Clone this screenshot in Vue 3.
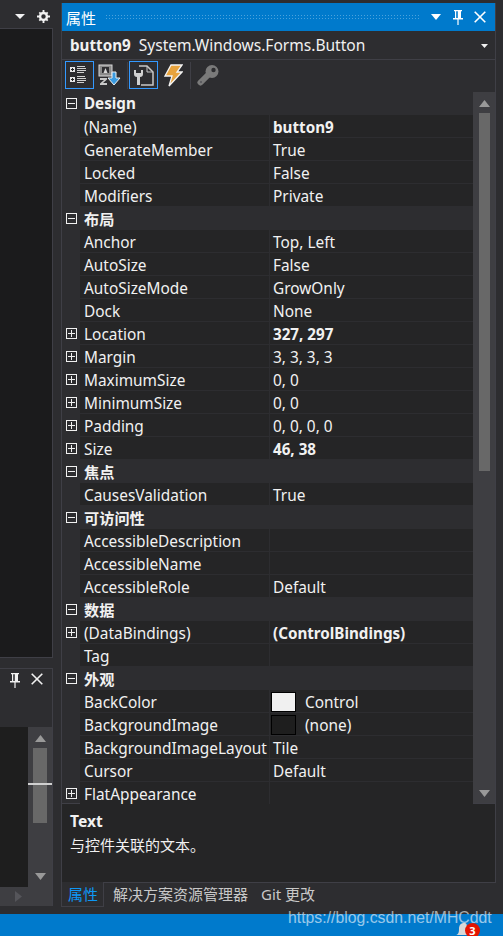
<script setup>
const rows = [
  { g: 'Design', open: true },
  { n: '(Name)', v: 'button9', b: true },
  { n: 'GenerateMember', v: 'True' },
  { n: 'Locked', v: 'False' },
  { n: 'Modifiers', v: 'Private' },
  { g: '布局', open: true },
  { n: 'Anchor', v: 'Top, Left' },
  { n: 'AutoSize', v: 'False' },
  { n: 'AutoSizeMode', v: 'GrowOnly' },
  { n: 'Dock', v: 'None' },
  { n: 'Location', v: '327, 297', b: true, plus: true },
  { n: 'Margin', v: '3, 3, 3, 3', plus: true },
  { n: 'MaximumSize', v: '0, 0', plus: true },
  { n: 'MinimumSize', v: '0, 0', plus: true },
  { n: 'Padding', v: '0, 0, 0, 0', plus: true },
  { n: 'Size', v: '46, 38', b: true, plus: true },
  { g: '焦点', open: true },
  { n: 'CausesValidation', v: 'True' },
  { g: '可访问性', open: true },
  { n: 'AccessibleDescription', v: '' },
  { n: 'AccessibleName', v: '' },
  { n: 'AccessibleRole', v: 'Default' },
  { g: '数据', open: true },
  { n: '(DataBindings)', v: '(ControlBindings)', b: true, plus: true },
  { n: 'Tag', v: '' },
  { g: '外观', open: true },
  { n: 'BackColor', v: 'Control', swatch: 'light' },
  { n: 'BackgroundImage', v: '(none)', swatch: 'dark' },
  { n: 'BackgroundImageLayout', v: 'Tile' },
  { n: 'Cursor', v: 'Default' },
  { n: 'FlatAppearance', v: '', plus: true }
]
</script>

<template>
  <div class="page">
    <div class="main">
      <div class="left">
        <div class="left-head">
          <svg width="10" height="5" viewBox="0 0 10 5"><path d="M0 0h10L5 5z" fill="#f1f1f1"/></svg>
          <svg width="13" height="13" viewBox="0 0 14 14"><circle cx="7" cy="7" r="3.700" fill="none" stroke="#f1f1f1" stroke-width="2.600"/><path d="M6 0h2v2.500H6zM6 11.500h2V14H6zM0 6h2.500v2H0zM11.500 6H14v2h-2.500zM1.800 3.200l1.400-1.400 1.600 1.600-1.400 1.400zM9.200 10.600l1.400-1.400 1.600 1.600-1.400 1.400zM10.800 1.800l1.400 1.400-1.600 1.600-1.400-1.400zM3.400 9.200l1.400 1.400-1.600 1.600-1.400-1.400z" fill="#f1f1f1"/></svg>
        </div>
        <div class="left-top"></div>
        <div class="left-low">
          <div class="low-head">
            <svg width="10" height="15" viewBox="0 0 10 15"><path d="M1 0h8v1.200H8V8h2v1.500H5.600V15H4.400V9.500H0V8h2V1.200H1zM3.200 1.200V8h1.600V1.200z" fill="#f1f1f1"/></svg>
            <svg width="12" height="12" viewBox="0 0 12 12"><path d="M.7.700l10.600 10.600M11.300.700L.7 11.300" stroke="#f1f1f1" stroke-width="1.600"/></svg>
          </div>
          <div class="low-body">
            <div class="low-view"></div>
            <div class="low-bar">
              <svg width="11" height="7" viewBox="0 0 11 7"><path d="M5.500 0L11 7H0z" fill="#999"/></svg>
              <div class="low-thumb"></div>
              <svg width="11" height="7" viewBox="0 0 11 7"><path d="M0 0h11L5.500 7z" fill="#999"/></svg>
              <div class="low-mark"></div>
            </div>
          </div>
          <div class="low-foot">
            <svg width="7" height="11" viewBox="0 0 7 11"><path d="M0 0l7 5.500L0 11z" fill="#55555a"/></svg>
          </div>
        </div>
      </div>

      <div class="panel">
        <div class="panel-box">
          <div class="title">
            <span class="title-text">属性</span>
            <span class="grip"></span>
            <svg width="10" height="6" viewBox="0 0 10 6"><path d="M0 0h10L5 6z" fill="#fff"/></svg>
            <svg class="pin" width="10" height="15" viewBox="0 0 10 15"><path d="M1 0h8v1.200H8V8h2v1.500H5.600V15H4.400V9.500H0V8h2V1.200H1zM3.200 1.200V8h1.600V1.200z" fill="#fff"/></svg>
            <svg width="12" height="12" viewBox="0 0 12 12"><path d="M.7.700l10.600 10.600M11.300.700L.7 11.300" stroke="#fff" stroke-width="1.600"/></svg>
          </div>

          <div class="object">
            <b>button9</b>
            <span class="type">System.Windows.Forms.Button</span>
            <svg class="obj-caret" width="7" height="4" viewBox="0 0 7 4"><path d="M0 0h7L3.500 4z" fill="#f1f1f1"/></svg>
          </div>

          <div class="tools">
            <div class="tool">
              <svg width="19" height="18" viewBox="0 0 19 18">
                <rect x="0" y="1" width="5" height="5" fill="#e6e6e6"/><path d="M1 3.500h3M2.500 2v3" stroke="#222" stroke-width="1"/>
                <rect x="0" y="11" width="5" height="5" fill="#e6e6e6"/><path d="M1 13.500h3M2.500 12v3" stroke="#222" stroke-width="1"/>
                <path d="M7 .5h8M7 2.500h9M7 4.500h9M7 6.500h7M7 10.500h8M7 12.500h9M7 14.500h9M7 16.500h7" stroke="#d0d0d0" stroke-width="1"/>
              </svg>
            </div>
            <svg class="t2" width="23" height="22" viewBox="0 0 23 22">
              <rect x="1" y="1" width="13" height="11" fill="#8a8a8a" stroke="#d8d8d8"/>
              <rect x="4" y="3" width="7" height="6" fill="#2d2d30"/>
              <path d="M5.500 9l2-5 2 5z" fill="#d8d8d8"/>
              <path d="M2 14h7v1.500L5 19h4v2H2v-1.500L6 16H2z" fill="#c8c8c8"/>
              <path d="M14 8h4v6h4l-6 7-6-7h4z" fill="#3a9be0" stroke="#f0f0f0"/>
            </svg>
            <span class="sep"></span>
            <div class="tool">
              <svg width="21" height="21" viewBox="0 0 21 21">
                <path d="M6 1h8l6 6v13H8" fill="none" stroke="#c8c8c8" stroke-width="1.500"/>
                <path d="M14 1v6h6" fill="none" stroke="#c8c8c8"/>
                <path d="M1 5v4c0 2 1 3 3 3v8h3v-8c2 0 3-1 3-3V5H8v3H3V5z" fill="#d0d0d0"/>
              </svg>
            </div>
            <svg class="t4" width="19" height="23" viewBox="0 0 19 23">
              <path d="M7 1h11l-5 7h5L5 22l3-10H1z" fill="#e8a33d" stroke="#f4f4f4" stroke-width="1.300"/>
            </svg>
            <span class="sep s2"></span>
            <svg class="t5" width="22" height="21" viewBox="0 0 22 21">
              <path d="M3.500 17.500L12 9" stroke="#7a7a7a" stroke-width="6" stroke-linecap="round"/>
              <circle cx="15" cy="6.500" r="6.500" fill="#7a7a7a"/>
              <circle cx="16.500" cy="5" r="2.200" fill="#2d2d30"/>
              <circle cx="4" cy="17" r="1" fill="#55555a"/>
            </svg>
          </div>

          <div class="grid-wrap">
            <div class="grid">
              <div v-for="r in rows" :key="r.g || r.n" class="row">
                <span class="gutter">
                  <span v-if="r.g || r.plus" class="box" :class="{ plus: r.plus }"></span>
                </span>
                <span v-if="r.g" class="gname">{{ r.g }}</span>
                <template v-else>
                  <span class="name">{{ r.n }}</span>
                  <span class="value" :class="{ bold: r.b }">
                    <span v-if="r.swatch" class="swatch" :class="r.swatch"></span>
                    {{ r.v }}
                  </span>
                </template>
              </div>
            </div>
            <div class="vbar">
              <svg width="11" height="7" viewBox="0 0 11 7"><path d="M5.500 0L11 7H0z" fill="#999"/></svg>
              <div class="thumb"></div>
              <svg class="down" width="11" height="7" viewBox="0 0 11 7"><path d="M0 0h11L5.500 7z" fill="#999"/></svg>
            </div>
          </div>

          <div class="desc">
            <b>Text</b>
            <span>与控件关联的文本。</span>
          </div>
        </div>

        <div class="tabs">
          <span class="tab active">属性</span>
          <span class="tab">解决方案资源管理器</span>
          <span class="tab">Git 更改</span>
        </div>
      </div>
    </div>
    <div class="status"></div>

    <div class="bell">
      <svg width="16" height="14" viewBox="0 0 16 14"><path d="M0 13c3 0 4-2 4-6s2-6 5-6 3 2 3 5v7z" fill="#d8d8d8"/></svg>
      <span class="badge">3</span>
    </div>
    <span class="mark">https://blog.csdn.net/MHCddt</span>
  </div>
</template>

<style>
html, body { margin: 0; background: #2d2d30; }
</style>

<style scoped>
.page {
  position: relative;
  width: 503px;
  height: 936px;
  overflow: hidden;
  display: flex;
  flex-direction: column;
  background: #2d2d30;
  color: #f1f1f1;
  font-family: "Noto Sans", "Noto Sans CJK SC", sans-serif;
  font-size: 15px;
}
.main { height: 914px; display: flex; flex: none; }
.left { width: 53px; flex: none; display: flex; flex-direction: column; }
.left-head {
  height: 28px;
  display: flex;
  align-items: center;
  justify-content: flex-end;
  gap: 12px;
  padding: 4px 3px 0 0;
  box-sizing: border-box;
}
.left-top {
  height: 630px;
  background: #1b1b1c;
  border: solid #3f3f46;
  border-width: 1px 1px 1px 0;
  box-sizing: border-box;
}
.left-low {
  margin-top: 10px;
  height: 238px;
  display: flex;
  flex-direction: column;
  border: solid #3f3f46;
  border-width: 1px 1px 0 0;
  box-sizing: border-box;
}
.low-head {
  height: 58px;
  display: flex;
  justify-content: flex-end;
  align-items: flex-start;
  gap: 11px;
  padding: 4px 9px 0 0;
  box-sizing: border-box;
  flex: none;
}
.low-body { height: 160px; flex: none; display: flex; }
.low-view { flex: 1; background: #1e1e1e; }
.low-bar {
  position: relative;
  width: 24px;
  background: #3e3e42;
  display: flex;
  flex-direction: column;
  align-items: center;
  padding: 8px 0 7px;
  box-sizing: border-box;
}
.low-thumb { width: 14px; height: 75px; margin: 6px 0 auto; background: #686868; }
.low-mark { position: absolute; left: 0; right: 0; top: 56px; height: 2px; background: #d0d0d0; }
.low-foot {
  flex: 1;
  background: #3e3e42;
  display: flex;
  align-items: center;
  padding-left: 15px;
}

.panel {
  width: 435px;
  margin: 3px 0 0 8px;
  display: flex;
  flex-direction: column;
  flex: none;
}
.panel-box {
  box-sizing: border-box;
  border: solid #3f3f46;
  border-width: 0 1px;
  display: flex;
  flex-direction: column;
  flex: none;
}
.title {
  height: 28px;
  background: #007acc;
  display: flex;
  align-items: center;
  padding: 0 9px 0 4px;
  color: #fff;
  flex: none;
}
.grip {
  flex: 1;
  height: 6px;
  margin: 0 10px 0 9px;
  background-image: radial-gradient(circle, #4ba2dc 0.7px, transparent 1px);
  background-size: 3px 3px;
}
.pin { margin: 0 11px 0 12px; }
.object {
  height: 28px;
  flex: none;
  display: flex;
  align-items: center;
  padding-left: 8px;
  gap: 8px;
  position: relative;
  border-bottom: 1px solid #3f3f46;
}
.object b { font-weight: 700; font-size: 15.2px; }
.type { font-size: 15.55px; }
.obj-caret { position: absolute; right: 7px; top: 13px; }
.tools {
  height: 32px;
  flex: none;
  display: flex;
  align-items: flex-start;
  padding: 1px 0 0 3px;
  box-sizing: border-box;
}
.tool {
  width: 29px;
  height: 28px;
  box-sizing: border-box;
  border: 1px solid #3399ff;
  display: flex;
  align-items: center;
  justify-content: center;
  flex: none;
}
.t2 { margin: 3px 0 0 4px; }
.sep { width: 1px; height: 27px; background: #3f3f46; margin: 1px 1px 0 6px; }
.t4 { margin: 3px 0 0 6px; }
.s2 { margin-left: 7px; }
.t5 { margin: 4px 0 0 5px; }
.grid-wrap { height: 711px; flex: none; display: flex; border-bottom: 1px solid #3f3f46; }
.grid { flex: 1; min-width: 0; }
.row { height: 23px; display: flex; align-items: center; box-sizing: border-box; }
.gutter {
  width: 18px;
  height: 100%;
  flex: none;
  display: flex;
  align-items: center;
  justify-content: center;
}
.box {
  position: relative;
  width: 11px;
  height: 11px;
  box-sizing: border-box;
  border: 1px solid #f1f1f1;
  display: block;
}
.box::before {
  content: "";
  position: absolute;
  left: 1px;
  right: 1px;
  top: 4px;
  height: 1px;
  background: #f1f1f1;
}
.box.plus::after {
  content: "";
  position: absolute;
  top: 1px;
  bottom: 1px;
  left: 4px;
  width: 1px;
  background: #f1f1f1;
}
.gname { font-weight: 700; font-size: 15.2px; padding: 0 0 1px 4px; }
.name, .value {
  height: 100%;
  display: flex;
  align-items: center;
  background: #252526;
  box-sizing: border-box;
  padding-top: 1px;
  border-bottom: 1px solid #2d2d30;
  white-space: nowrap;
  overflow: hidden;
}
.name { width: 190px; flex: none; padding-left: 4px; padding-top: 3px; border-right: 1px solid #2d2d30; font-size: 15.4px; }
.value { flex: 1; padding-left: 3px; padding-top: 3px; font-size: 15.4px; }
.value.bold { font-weight: 700; font-size: 15.2px; padding-top: 1px; }
.swatch {
  width: 25px;
  height: 20px;
  box-sizing: border-box;
  border: 1px solid #000;
  margin: -2px 9px 0 -2px;
  flex: none;
}
.swatch.light { background: #f0f0f0; }
.swatch.dark { background: #1e1e1e; }
.vbar {
  width: 22px;
  flex: none;
  background: #3e3e42;
  display: flex;
  flex-direction: column;
  align-items: center;
  padding: 8px 0 6px;
  box-sizing: border-box;
}
.thumb { width: 11px; height: 358px; margin-top: 6px; background: #686868; }
.down { margin-top: auto; }
.desc {
  height: 79px;
  flex: none;
  background: #252526;
  padding: 5px 8px;
  box-sizing: border-box;
  display: flex;
  flex-direction: column;
  line-height: 24px;
  border-bottom: 1px solid #3f3f46;
}
.desc b { font-size: 15.6px; }
.tabs { height: 25px; margin-top: -1px; flex: none; display: flex; color: #c8c8c8; }
.tab { padding: 0 4px 0 9px; line-height: 24px; }
.tab.active {
  color: #0e97f5;
  padding: 0 5px 0 6px;
  width: 30px;
  height: 24px;
  background: #2d2d30;
  border: solid #3f3f46;
  border-width: 0 1px 1px;
}

.status { flex: 1; background: #007acc; }
.bell { position: absolute; left: 455px; top: 920px; }
.badge {
  position: absolute;
  left: 10px;
  top: 3px;
  width: 15px;
  height: 15px;
  border-radius: 50%;
  background: #e51400;
  color: #fff;
  font-size: 11px;
  font-weight: 700;
  line-height: 15px;
  text-align: center;
}
.mark {
  position: absolute;
  left: 288px;
  top: 906px;
  font-family: "Liberation Sans", sans-serif;
  font-size: 15.8px;
  color: rgba(255, 255, 255, 0.6);
  line-height: 24px;
}
</style>
